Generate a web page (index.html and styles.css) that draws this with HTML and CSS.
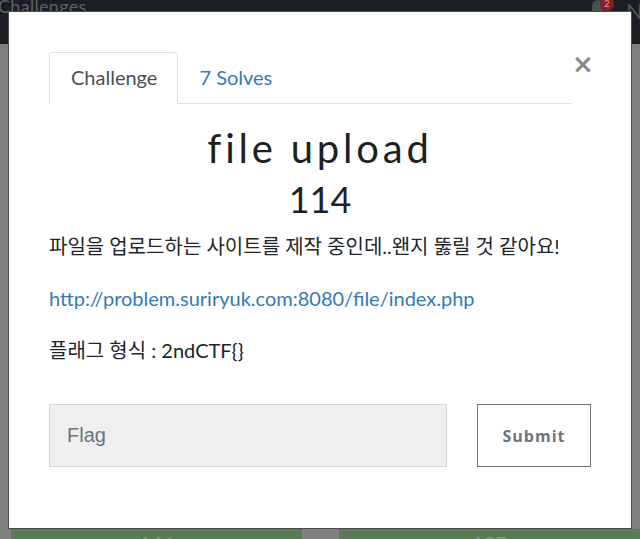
FILE: index.html
```html
<!DOCTYPE html>
<html lang="ko">
<head>
<meta charset="utf-8">
<title>Challenges</title>
<link rel="stylesheet" href="styles.css">
</head>
<body>
<div class="page">
  <header class="navbar">
    <span class="brand">Challenges</span>
    <div class="nav-right">
      <span class="bell"></span>
      <span class="badge">2</span>
      <span class="user">N</span>
    </div>
  </header>
  <main class="board">
    <div class="cards">
      <div class="card">146</div>
      <div class="gap"></div>
      <div class="card">187</div>
    </div>
  </main>
</div>

<div class="modal">
  <div class="modal-head">
    <ul class="tabs">
      <li class="tab active">Challenge</li>
      <li class="tab link">7 Solves</li>
    </ul>
    <button class="close" aria-label="Close">&times;</button>
  </div>
  <div class="content">
    <h2 class="title">file upload</h2>
    <h3 class="score">114</h3>
    <p class="desc first">파일을 업로드하는 사이트를 제작 중인데..왠지 뚫릴 것 같아요!</p>
    <p class="desc"><a class="url" href="#">http://problem.suriryuk.com:8080/file/index.php</a></p>
    <p class="desc">플래그 형식 : 2ndCTF{}</p>
    <form class="flag-form">
      <input class="flag-input" type="text" placeholder="Flag">
      <button class="submit" type="button">Submit</button>
    </form>
  </div>
</div>
</body>
</html>
```

FILE: styles.css
```css
* { box-sizing: border-box; }
html, body { margin: 0; padding: 0; }
body {
  width: 640px;
  height: 539px;
  overflow: hidden;
  background: #7f7f7f;
  font-family: Lato, "Noto Sans CJK KR", sans-serif;
}
.page { display: flex; flex-direction: column; height: 539px; }
.navbar {
  height: 44px;
  background: #1b1e22;
  display: flex;
  justify-content: space-between;
  align-items: flex-start;
  overflow: hidden;
}
.brand {
  font-size: 18px;
  color: #5d6064;
  margin-top: -5px;
  margin-left: -2px;
  letter-spacing: 0.3px;
}
.nav-right { display: flex; align-items: flex-start; }
.bell {
  width: 12px; height: 14px;
  background: #4a4d51;
  border-radius: 6px 6px 2px 2px;
}
.badge {
  width: 14px; height: 14px;
  border-radius: 50%;
  background: #8c1c25;
  color: #c9a6a9;
  font-size: 10px;
  text-align: center;
  line-height: 12px;
  margin-top: -3px;
  margin-left: -4px;
}
.user {
  font-size: 22px;
  color: #53575b;
  margin-left: 12px;
  margin-top: -3px;
  width: 14px;
  overflow: hidden;
}
.board { flex: 1; display: flex; flex-direction: column; justify-content: flex-end; }
.cards { display: flex; padding-left: 11px; height: 10px; }
.card {
  background: #5b7a58;
  color: #8d938c;
  font-size: 20px;
  text-align: center;
  line-height: 28px;
  overflow: hidden;
  width: 291px;
  height: 10px;
}
.card:last-child { flex: 1; }
.gap { width: 37px; background: #808080; }

.modal {
  position: absolute;
  left: 8px;
  top: 11px;
  width: 624px;
  height: 518px;
  background: #fff;
  border: 1px solid #4a4a4a;
  padding: 40px 40px 0 40px;
}
.modal-head { display: flex; align-items: flex-start; }
.tabs {
  flex: 1;
  display: flex;
  list-style: none;
  margin: 0;
  padding: 0;
  border-bottom: 1px solid #dee2e6;
  height: 52px;
}
.tab {
  height: 52px;
  padding: 0 20px 0 21px;
  font-size: 20px;
  line-height: 48px;
  border: 1px solid transparent;
  border-radius: 4px 4px 0 0;
}
.tab.active {
  color: #495057;
  border-color: #dee2e6 #dee2e6 #fff;
  background: #fff;
}
.tab.link { color: #337ab7; padding-left: 20px; }
.close {
  border: 0;
  background: none;
  padding: 0;
  width: 19px;
  font-family: "DejaVu Sans", sans-serif;
  font-size: 26px;
  line-height: 24px;
  font-weight: bold;
  color: #8a8a8a;
  margin-top: 0;
  text-align: right;
}
.content { color: #212529; }
.title {
  margin: 21px 0 0;
  text-align: center;
  font-weight: 400;
  font-size: 40px;
  line-height: 46px;
  letter-spacing: 3.8px;
  color: #1d1f22;
}
.score {
  margin: 8px 0 0;
  text-align: center;
  font-weight: 400;
  font-size: 36px;
  line-height: 40px;
  color: #1d1f22;
}
.desc {
  margin: 0 0 22px;
  font-size: 20px;
  line-height: 30px;
}
.desc.first { margin-top: 12px; }
.url { color: #337ab7; text-decoration: none; }
.flag-form {
  display: grid;
  grid-template-columns: 398px 1fr;
  column-gap: 30px;
  margin-top: 39px;
}
.flag-input {
  height: 63px;
  background: #efefef;
  border: 1px solid #d3d6d9;
  padding: 0 17px;
  font-family: "Liberation Sans", Arial, sans-serif;
  font-size: 20px;
  color: #495057;
}
.flag-input::placeholder { color: #6c757d; }
.submit {
  height: 63px;
  background: #fff;
  border: 1px solid #6c757d;
  font-family: "Open Sans", sans-serif;
  font-weight: 700;
  font-size: 16px;
  letter-spacing: 1px;
  color: #6c757d;
}
```
